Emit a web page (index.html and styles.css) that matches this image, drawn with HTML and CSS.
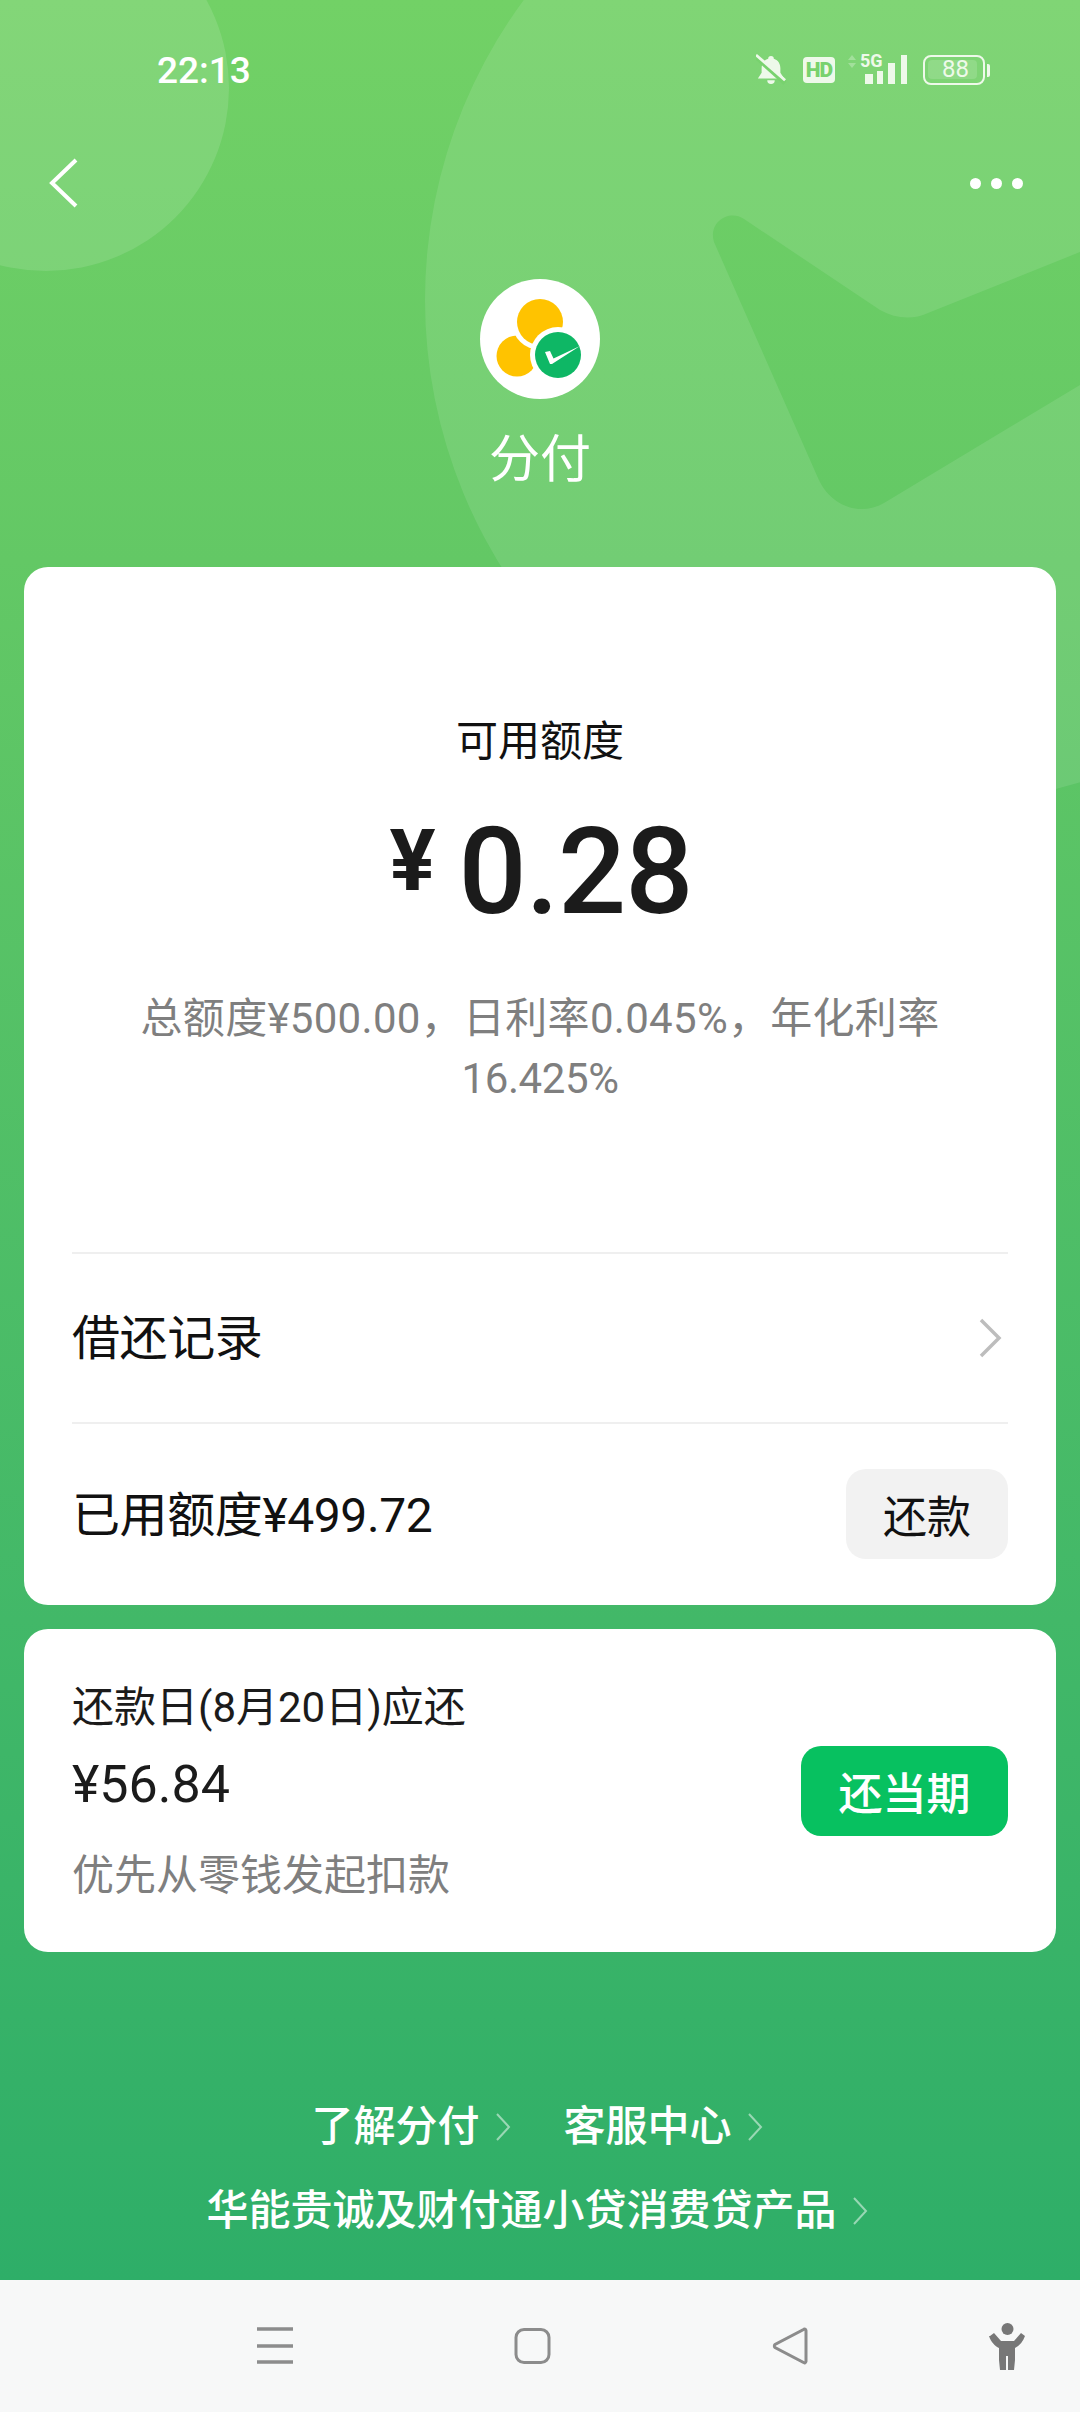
FILE: index.html
```html
<!DOCTYPE html>
<html>
  <head>
  <meta charset='utf-8'>
  <title>分付</title>
  <link rel="stylesheet" href="styles.css">
  </head>

  <body>
  <div class="page">
    <svg class="deco" width="1080" height="900" viewBox="0 0 1080 900">
      <circle cx="46" cy="88" r="183" fill="#fff" fill-opacity="0.12"/>
      <path fill="#fff" fill-opacity="0.1" fill-rule="evenodd" d="M425 300a505 505 0 1 0 1010 0a505 505 0 1 0 -1010 0z
        M744 219C729 209 708 222 714 242L818 478C830 506 860 517 884 503L1080 385V252L928 313C913 320 896 319 880 310z"/>
    </svg>

    <div class="status">
      <span class="time">22:13</span>
      <div class="status-icons">
        <svg class="ic-bell" width="30" height="34" viewBox="0 0 32 34">
          <path fill="#eef9ea" d="M16 2a3 3 0 0 1 3 3c5 1.500 7 6 7 10v5l4 6H2l4-6v-5c0-4 2-8.500 7-10a3 3 0 0 1 3-3z"/>
          <path fill="#eef9ea" d="M12 28h8a4 4 0 0 1-8 0z"/>
          <path stroke="#78d26e" stroke-width="5" d="M1 4l30 27"/>
          <path stroke="#eef9ea" stroke-width="3" d="M0 1l31 27"/>
        </svg>
        <span class="hd">HD</span>
        <svg class="ic-signal" width="60" height="40" viewBox="0 0 60 40">
          <path fill="#fff" fill-opacity="0.28" d="M4 5l4 5H0zM4 18l4-5H0z"/>
          <text x="12" y="17" class="five-g">5G</text>
          <rect x="17" y="24" width="8" height="10" fill="#eef9ea"/>
          <rect x="29" y="21" width="6" height="13" fill="#eef9ea"/>
          <rect x="40" y="13" width="7" height="21" fill="#eef9ea"/>
          <rect x="53" y="5" width="6" height="29" fill="#eef9ea"/>
        </svg>
        <div class="battery">
          <div class="battery-body"><span class="battery-fill">88</span></div>
          <div class="battery-cap"></div>
        </div>
      </div>
    </div>

    <div class="toolbar">
      <svg width="30" height="52" viewBox="0 0 30 52">
        <path d="M27 3L3 26l24 23" fill="none" stroke="#fff" stroke-width="4"/>
      </svg>
      <div class="dots"><i></i><i></i><i></i></div>
    </div>

    <div class="brand">
      <svg class="logo" width="120" height="120" viewBox="0 0 120 120">
        <circle cx="60" cy="60" r="60" fill="#fff"/>
        <circle cx="37" cy="77" r="20.500" fill="#ffc300"/>
        <circle cx="60" cy="43" r="28" fill="#fff"/>
        <circle cx="60" cy="43" r="23" fill="#ffc300"/>
        <circle cx="78" cy="76" r="28" fill="#fff"/>
        <circle cx="78" cy="76" r="23" fill="#0eb765"/>
        <path fill="#fff" d="M65 73l5-1 3.500 7.500L100 67 72 85h-2z"/>
      </svg>
      <div class="brand-name">分付</div>
    </div>

    <div class="card card-main">
      <div class="summary">
        <div class="summary-label">可用额度</div>
        <div class="amount"><span class="amount-yen">¥</span><span class="amount-num">0.28</span></div>
        <div class="summary-note">总额度¥500.00，日利率0.045%，年化利率<br>16.425%</div>
      </div>
      <div class="row row-link">
        <span>借还记录</span>
        <svg width="24" height="40" viewBox="0 0 24 40">
          <path d="M3 2l18 18L3 38" fill="none" stroke="#bdbdbd" stroke-width="3.500"/>
        </svg>
      </div>
      <div class="row row-used">
        <span>已用额度¥499.72</span>
        <div class="btn btn-grey">还款</div>
      </div>
    </div>

    <div class="card card-due">
      <div>
        <div class="due-title">还款日(8月20日)应还</div>
        <div class="due-amount">¥56.84</div>
        <div class="due-note">优先从零钱发起扣款</div>
      </div>
      <div class="btn btn-green">还当期</div>
    </div>

    <div class="links">
      <div class="links-row">
        <a class="link">了解分付<svg width="15" height="28" viewBox="0 0 15 28"><path d="M1 1l12 13L1 27" fill="none" stroke="#fff" stroke-opacity="0.5" stroke-width="2"/></svg></a>
        <a class="link">客服中心<svg width="15" height="28" viewBox="0 0 15 28"><path d="M1 1l12 13L1 27" fill="none" stroke="#fff" stroke-opacity="0.5" stroke-width="2"/></svg></a>
      </div>
      <div class="links-row">
        <a class="link">华能贵诚及财付通小贷消费贷产品<svg width="15" height="28" viewBox="0 0 15 28"><path d="M1 1l12 13L1 27" fill="none" stroke="#fff" stroke-opacity="0.5" stroke-width="2"/></svg></a>
      </div>
    </div>

    <div class="navbar">
      <svg width="1080" height="132" viewBox="0 0 1080 132">
        <path d="M257 49h36M257 66h36M257 82h36" stroke="#8c8c8c" stroke-width="3.500"/>
        <rect x="516" y="49.500" width="33" height="33" rx="8" fill="none" stroke="#8c8c8c" stroke-width="3"/>
        <path d="M806 50.500v31a1.500 1.500 0 0 1-2.500 1L775 67.500a2 2 0 0 1 0-3l28.500-15a1.500 1.500 0 0 1 2.500 1z" fill="none" stroke="#8c8c8c" stroke-width="3"/>
        <circle cx="1007.500" cy="49" r="6" fill="#777"/>
        <path fill="#777" d="M990 56l4-3 7 8h13l7-8 4 3c-2 6-6 10-10 12v12l-1 10h-6V76h-2v14h-6l-1-10V68c-4-2-8-6-10-12z"/>
      </svg>
    </div>
  </div>
  </body>
</html>
```

FILE: styles.css
```css
* {
  box-sizing: border-box;
}

body {
  margin: 0;
  font-family: Roboto, "Noto Sans CJK SC", sans-serif;
}

.page {
  position: relative;
  width: 1080px;
  height: 2412px;
  display: flex;
  flex-direction: column;
  overflow: hidden;
  background: linear-gradient(#72d166 0px, #63c865 560px, #42b868 1620px, #2eae68 2280px);
}

.deco {
  position: absolute;
  left: 0;
  top: 0;
}

.status, .toolbar, .brand, .card, .links, .navbar {
  position: relative;
}

.status {
  height: 138px;
  flex: none;
  display: flex;
  align-items: center;
  justify-content: space-between;
  padding: 2px 90px 0 157px;
}

.time {
  color: #fff;
  font-size: 37px;
  font-weight: 500;
}

.status-icons {
  display: flex;
  align-items: center;
  gap: 15px;
}

.hd {
  width: 32px;
  height: 26px;
  margin-left: 2px;
  margin-right: -2px;
  border-radius: 4px;
  background: #eef9ea;
  color: #78d26e;
  font-size: 21px;
  line-height: 26px;
  font-weight: 900;
  text-align: center;
  letter-spacing: -1px;
}

.five-g {
  font-family: Roboto, sans-serif;
  font-size: 18px;
  font-weight: 700;
  fill: #eef9ea;
}

.battery {
  display: flex;
  align-items: center;
  gap: 2px;
}

.battery-body {
  width: 62px;
  height: 30px;
  padding: 3px;
  border: 2.500px solid #eef9ea;
  border-radius: 8px;
}

.battery-fill {
  display: block;
  width: 49px;
  height: 19px;
  border-radius: 4px;
  background: rgba(255, 255, 255, 0.14);
  color: #eef9ea;
  font-size: 24px;
  line-height: 19px;
  text-align: center;
  padding-left: 6px;
}

.battery-cap {
  width: 3px;
  height: 13px;
  background: #eef9ea;
  border-radius: 0 2px 2px 0;
}

.toolbar {
  height: 90px;
  flex: none;
  display: flex;
  align-items: center;
  justify-content: space-between;
  padding: 0 57px 0 49px;
}

.dots {
  display: flex;
  gap: 10px;
}

.dots i {
  width: 11px;
  height: 11px;
  border-radius: 50%;
  background: #fff;
}

.brand {
  flex: none;
  padding-top: 51px;
  display: flex;
  flex-direction: column;
  align-items: center;
}

.logo {
  display: block;
}

.brand-name {
  margin-top: 26px;
  color: #fff;
  font-size: 51px;
  line-height: 70px;
}

.card {
  flex: none;
  margin: 0 24px;
  background: #fff;
  border-radius: 24px;
}

.card-main {
  margin-top: 72px;
  height: 1038px;
}

.summary {
  height: 685px;
  padding-top: 145px;
  text-align: center;
}

.summary-label {
  font-size: 42px;
  line-height: 60px;
  color: #111;
}

.amount {
  margin-top: 34px;
  height: 130px;
  padding-left: 2px;
  display: flex;
  justify-content: center;
  gap: 23px;
  color: #1b1b1b;
}

.amount-yen {
  font-size: 86px;
  font-weight: 700;
  line-height: 110px;
}

.amount-num {
  font-size: 120px;
  font-weight: 500;
  line-height: 132px;
  letter-spacing: -1px;
}

.summary-note {
  margin-top: 53px;
  font-size: 42px;
  line-height: 60px;
  color: #7f7f7f;
  letter-spacing: -0.4px;
}

.summary-note::first-line {
  letter-spacing: 0.3px;
}

.row {
  margin: 0 48px;
  display: flex;
  align-items: center;
  justify-content: space-between;
  border-top: 2px solid #efefef;
  font-size: 48px;
  color: #111;
}

.row span {
  margin-bottom: 8px;
  letter-spacing: -0.4px;
}

.row-link {
  height: 170px;
  padding-right: 6px;
}

.row-used {
  height: 183px;
}

.btn {
  display: flex;
  align-items: center;
  justify-content: center;
  border-radius: 20px;
  font-size: 44px;
}

.btn-grey {
  width: 162px;
  height: 90px;
  margin-bottom: 2px;
  background: #f2f2f2;
  color: #111;
}

.btn-green {
  width: 207px;
  height: 90px;
  margin-bottom: 2px;
  background: #07c160;
  color: #fff;
  font-weight: 500;
}

.card-due {
  margin-top: 24px;
  height: 323px;
  padding: 50px 48px 48px;
  display: flex;
  align-items: center;
  justify-content: space-between;
}

.due-title {
  font-size: 42px;
  line-height: 58px;
  color: #1b1b1b;
}

.due-amount {
  margin-top: 18px;
  font-size: 52px;
  line-height: 60px;
  color: #1b1b1b;
}

.due-note {
  margin-top: 32px;
  font-size: 42px;
  line-height: 58px;
  color: #7f7f7f;
}

.links {
  flex: none;
  margin-top: 145px;
  padding-right: 6px;
  display: flex;
  flex-direction: column;
  align-items: center;
  gap: 24px;
}

.links-row {
  display: flex;
  justify-content: center;
  gap: 53px;
}

.link {
  display: flex;
  align-items: center;
  gap: 16px;
  color: #fff;
  font-size: 42px;
  font-weight: 500;
  line-height: 60px;
}

.navbar {
  flex: none;
  margin-top: auto;
  height: 132px;
  background: #f7f8f8;
}

.navbar svg {
  display: block;
}
```
